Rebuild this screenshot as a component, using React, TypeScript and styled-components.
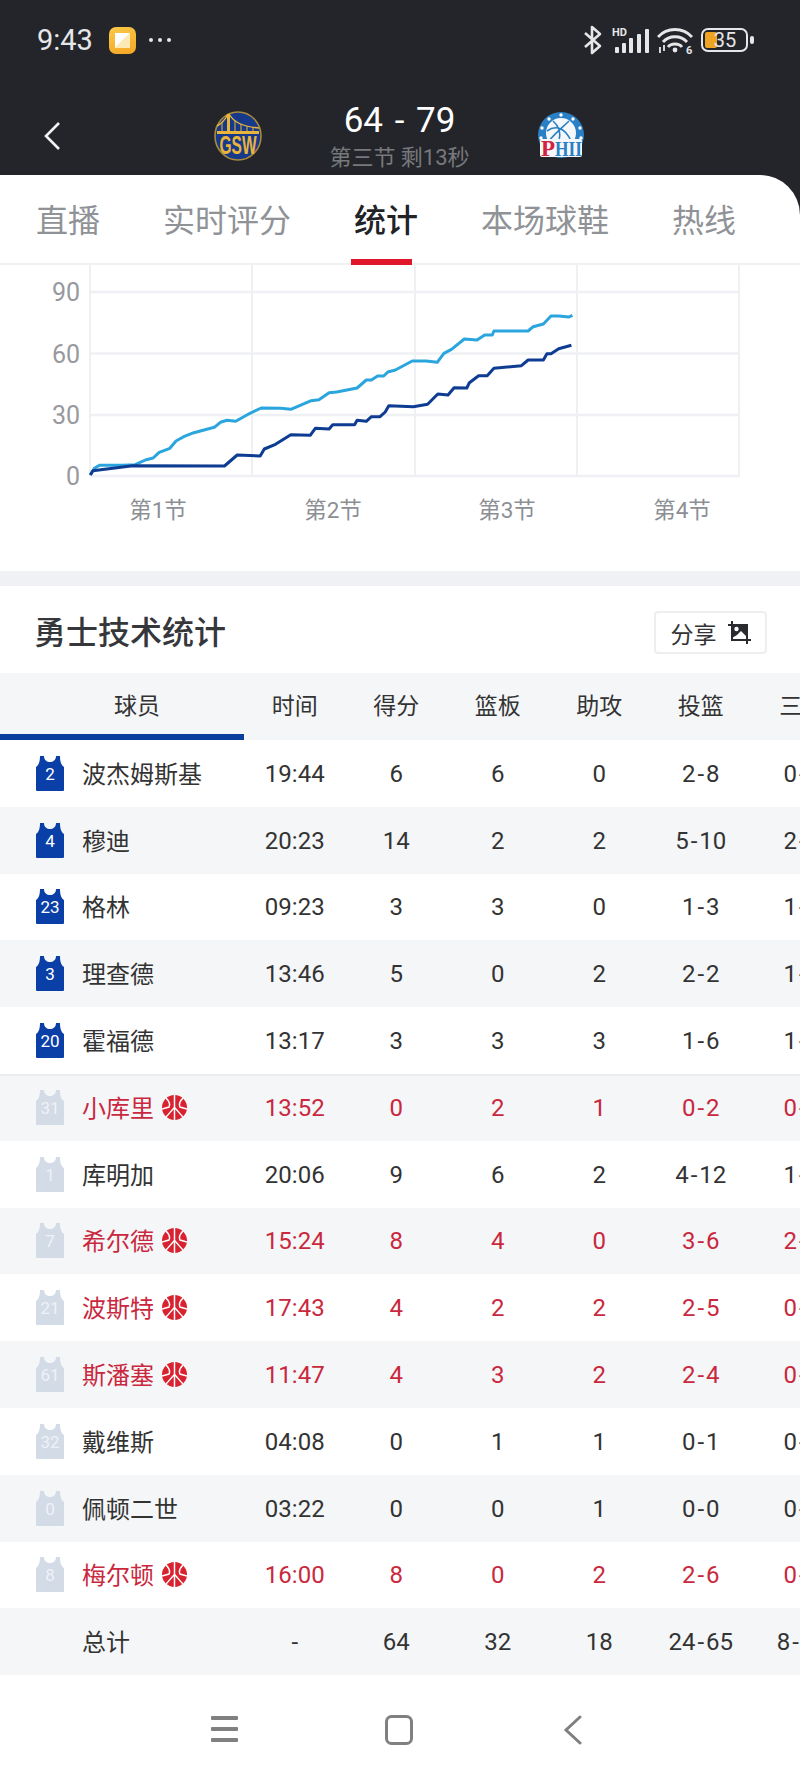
import React from 'react';
import styled, { createGlobalStyle } from 'styled-components';

const FONT = 'Roboto, "Noto Sans CJK SC", sans-serif';
const DARK = '#24252a';
const RED = '#c9283e';

const GlobalStyle = createGlobalStyle`
  html, body {
    margin: 0;
    padding: 0;
    background: #fff;
  }
  body {
    font-family: ${FONT};
  }
`;

const Screen = styled.div`
  width: 800px;
  height: 1778px;
  overflow: hidden;
  background: ${DARK};
`;

const StatusBar = styled.div`
  height: 80px;
  display: flex;
  align-items: center;
  padding: 0 46px 0 37px;
`;

const Time = styled.div`
  font-size: 29px;
  color: #e6e7e9;
  width: 72px;
`;

const AppIcon = styled.div`
  width: 27px;
  height: 27px;
  border-radius: 7px;
  background: linear-gradient(160deg, #fbc84a, #f5a623);
  display: flex;
  align-items: center;
  justify-content: center;
  &::after {
    content: '';
    width: 15px;
    height: 15px;
    background: linear-gradient(135deg, #fff 50%, #fde9b4 50%);
  }
`;

const Dots = styled.div`
  display: flex;
  gap: 5px;
  margin-left: 13px;
  i {
    width: 4px;
    height: 4px;
    border-radius: 50%;
    background: #e6e7e9;
  }
`;

const StatusIcons = styled.div`
  margin-left: auto;
  display: flex;
  align-items: center;
  gap: 8px;
`;

const MatchBar = styled.div`
  height: 95px;
  display: grid;
  grid-template-columns: 214px 48px 275px 48px 1fr;
`;

const BackCell = styled.div`
  padding: 41px 0 0 43px;
`;

const LogoCell = styled.div`
  padding-top: 31px;
`;

const ScoreBlock = styled.div`
  padding-top: 21px;
  text-align: center;
`;

const Score = styled.div`
  font-size: 35px;
  line-height: 40px;
  color: #fff;
  word-spacing: 3px;
`;

const Period = styled.div`
  font-size: 22px;
  line-height: 33px;
  color: #77797d;
`;

const Content = styled.div`
  background: #fff;
  border-top-right-radius: 40px;
  height: 1603px;
`;

const Tabs = styled.div`
  height: 90px;
  box-sizing: border-box;
  display: flex;
  align-items: center;
  gap: 63px;
  padding: 4px 0 0 36px;
  border-bottom: 2px solid #f0f1f3;
`;

const Tab = styled.div<{ $active?: boolean }>`
  position: relative;
  font-size: 32px;
  line-height: 44px;
  color: ${(p) => (p.$active ? '#222327' : '#8f9296')};
  font-weight: ${(p) => (p.$active ? 500 : 400)};
  ${(p) =>
    p.$active &&
    `&::after {
      content: '';
      position: absolute;
      left: -3px;
      width: 61px;
      top: 60px;
      height: 6px;
      background: #e0162b;
    }`}
`;

const ChartHolder = styled.div`
  height: 306px;
  svg {
    display: block;
  }
`;

const Band = styled.div`
  height: 15px;
  background: #eff1f4;
`;

const TitleRow = styled.div`
  height: 87px;
  box-sizing: border-box;
  display: flex;
  align-items: center;
  justify-content: space-between;
  padding: 0 33px 0 34px;
`;

const Title = styled.div`
  font-size: 32px;
  font-weight: 500;
  color: #36373b;
`;

const ShareButton = styled.div`
  width: 113px;
  height: 43px;
  box-sizing: border-box;
  margin-top: 6px;
  border: 2px solid #eceef0;
  border-radius: 4px;
  display: flex;
  align-items: center;
  justify-content: center;
  gap: 11px;
  font-size: 23px;
  color: #333;
`;

const TableWrap = styled.div`
  overflow: hidden;
`;

const Row = styled.div<{ $stripe?: boolean; $divider?: boolean; $head?: boolean }>`
  width: 853px;
  height: ${(p) => (p.$head ? '67px' : '66.8px')};
  box-sizing: border-box;
  display: grid;
  grid-template-columns: 244px repeat(6, 101.5px);
  align-items: center;
  background: ${(p) => (p.$stripe ? '#f5f6f8' : '#fff')};
  box-shadow: ${(p) => (p.$divider ? 'inset 0 2px 0 #ebedf0' : 'none')};
`;

const HeadPlayer = styled.div`
  height: 100%;
  box-sizing: border-box;
  padding: 1px 0 0 30px;
  display: flex;
  align-items: center;
  justify-content: center;
  font-size: 23px;
  color: #333;
  border-bottom: 6px solid #0b3f9e;
`;

const HeadCell = styled.div`
  text-align: center;
  font-size: 23px;
  color: #333;
  padding-bottom: 5px;
`;

const PlayerCell = styled.div`
  display: flex;
  align-items: center;
  padding-left: 36px;
`;

const JerseyHolder = styled.div`
  width: 28px;
  height: 35px;
  margin-right: 18px;
  svg {
    display: block;
  }
`;

const NoJersey = styled.div`
  width: 46px;
`;

const Name = styled.div<{ $red?: boolean }>`
  font-size: 24px;
  padding-bottom: 2px;
  color: ${(p) => (p.$red ? RED : '#333')};
  white-space: nowrap;
`;

const BallHolder = styled.div`
  margin-left: 8px;
  height: 25px;
  svg {
    display: block;
  }
`;

const Stat = styled.div<{ $red?: boolean }>`
  text-align: center;
  font-size: 24px;
  padding-top: 1px;
  white-space: nowrap;
  color: ${(p) => (p.$red ? RED : '#333')};
`;

const Dash = styled.span`
  padding: 0 2px;
`;

const NavBar = styled.div`
  height: 103px;
  box-sizing: border-box;
  padding: 40px 0 0 211px;
  display: flex;
  align-items: flex-start;
  gap: 147px;
`;

const NavBack = styled.div`
  margin-left: 3px;
  height: 30px;
`;

// points read off the chart, in zoom coordinates
const toPoints = (raw: number[][]) =>
  raw.map(([x, y]) => `${(x / 1.96).toFixed(1)},${(y / 3 - 5).toFixed(1)}`).join(' ');

const PHI_LINE = [
  [177, 645], [185, 625], [195, 616], [240, 616], [265, 614], [285, 600], [300, 594], [312, 577],
  [333, 565], [345, 543], [360, 530], [380, 518], [420, 502], [432, 487], [445, 481], [462, 484],
  [490, 460], [512, 444], [550, 445], [570, 448], [610, 422], [625, 419], [645, 398], [660, 396],
  [700, 384], [718, 360], [728, 360], [740, 348], [752, 348], [760, 336], [775, 330], [808, 303],
  [835, 303], [857, 307], [870, 280], [885, 268], [910, 237], [935, 240], [950, 225], [965, 225],
  [968, 213], [1035, 213], [1045, 200], [1065, 192], [1080, 168], [1095, 168], [1115, 171], [1122, 166],
];

const GSW_LINE = [
  [177, 645], [182, 632], [260, 617], [440, 618], [465, 585], [510, 588], [518, 567], [540, 553],
  [570, 524], [608, 526], [618, 505], [645, 507], [652, 494], [695, 494], [700, 481], [718, 484],
  [728, 470], [745, 470], [755, 456], [762, 437], [810, 440], [838, 433], [858, 402], [878, 405],
  [890, 383], [915, 384], [920, 368], [938, 347], [955, 347], [968, 325], [1022, 317], [1035, 300],
  [1065, 300], [1072, 281], [1080, 281], [1095, 266], [1120, 256],
];

const Y_TICKS = [
  { label: '90', y: 27 },
  { label: '60', y: 88.5 },
  { label: '30', y: 150 },
  { label: '0', y: 211 },
];
const X_LINES = [90, 252, 415, 577, 739];
const X_LABELS = [
  { label: '第1节', x: 158 },
  { label: '第2节', x: 333 },
  { label: '第3节', x: 507 },
  { label: '第4节', x: 682 },
];

function Chart() {
  return (
    <ChartHolder>
      <svg width="800" height="306" viewBox="0 0 800 306" fontFamily={FONT}>
        {X_LINES.map((x) => (
          <line key={x} x1={x} x2={x} y1={0} y2={211} stroke="#eff0f3" strokeWidth="2" />
        ))}
        {Y_TICKS.map((t) => (
          <g key={t.label}>
            <line x1={90} x2={740} y1={t.y} y2={t.y} stroke="#eff0f3" strokeWidth="2.5" />
            <text x={80} y={t.y + 9} textAnchor="end" fontSize="25" fill="#97999e">
              {t.label}
            </text>
          </g>
        ))}
        <polyline points={toPoints(PHI_LINE)} fill="none" stroke="#2aa5dd" strokeWidth="3" strokeLinejoin="round" />
        <polyline points={toPoints(GSW_LINE)} fill="none" stroke="#0d3c92" strokeWidth="3" strokeLinejoin="round" />
        {X_LABELS.map((t) => (
          <text key={t.label} x={t.x} y={253} textAnchor="middle" fontSize="22.5" fill="#8c8f94">
            {t.label}
          </text>
        ))}
      </svg>
    </ChartHolder>
  );
}

function Bluetooth() {
  return (
    <svg width="22" height="30" viewBox="0 0 22 30" fill="none" stroke="#e6e7e9" strokeWidth="2.6">
      <path d="M3 8 L18 21 L10 28 V2 L18 9 L3 22" strokeLinejoin="round" />
    </svg>
  );
}

function Signal() {
  return (
    <svg width="37" height="28" viewBox="0 0 37 28" fill="#e6e7e9">
      <text x="0" y="10" fontSize="11" fontWeight="700" fontFamily={FONT}>
        HD
      </text>
      <rect x="3" y="21" width="4" height="6" rx="1" />
      <rect x="10" y="17" width="4" height="10" rx="1" />
      <rect x="17" y="12" width="4" height="15" rx="1" />
      <rect x="25" y="8" width="4" height="19" rx="1" />
      <rect x="33" y="3" width="4" height="24" rx="1" />
    </svg>
  );
}

function Wifi() {
  return (
    <svg width="36" height="28" viewBox="0 0 36 28" fill="none" stroke="#e6e7e9" strokeWidth="2.8">
      <path d="M1 11 C10 1 26 1 35 11" />
      <path d="M6 16 C12 9 24 9 30 16" />
      <path d="M11 21 C14 17 22 17 25 21" />
      <circle cx="18" cy="24" r="2.4" fill="#e6e7e9" stroke="none" />
      <path d="M3 21 v6 M7 19 v6" strokeWidth="1.8" />
      <text x="29" y="28" fontSize="11" fontWeight="700" fill="#e6e7e9" stroke="none" fontFamily={FONT}>
        6
      </text>
    </svg>
  );
}

function Battery() {
  return (
    <svg width="53" height="24" viewBox="0 0 53 24" fill="none">
      <rect x="1" y="1" width="45" height="22" rx="6" stroke="#e6e7e9" strokeWidth="2" />
      <rect x="4" y="4" width="12" height="16" rx="2" fill="#f0a423" />
      <rect x="49" y="8" width="4" height="8" rx="2" fill="#e6e7e9" />
      <text x="24" y="19" textAnchor="middle" fontSize="20" fill="#e6e7e9" fontFamily={FONT}>
        35
      </text>
    </svg>
  );
}

function BackArrow() {
  return (
    <svg width="18" height="30" viewBox="0 0 18 30" fill="none" stroke="#f2f2f2" strokeWidth="2.6">
      <path d="M16 2 L3 15 L16 28" />
    </svg>
  );
}

function GswLogo() {
  return (
    <svg width="48" height="50" viewBox="0 0 48 50">
      <ellipse cx="24" cy="25" rx="23" ry="24" fill="#17398a" stroke="#a98a3c" strokeWidth="1.6" />
      <path d="M3 23 V20 H45 V23 Z M13 3 h3 V23 h-3 Z" fill="#e9b43a" />
      <path d="M15 3 C20 12 32 16 45 17 M14 3 C11 9 7 13 3 15" stroke="#e9b43a" strokeWidth="1.4" fill="none" />
      <path d="M21 10 V20 M27 13 V20 M33 15 V20 M39 16 V20 M8 11 V20" stroke="#e9b43a" strokeWidth="1" />
      <text x="24" y="43" textAnchor="middle" fontSize="26" fontWeight="700" fill="#e9b43a" fontFamily="Liberation Sans, sans-serif" textLength="37" lengthAdjust="spacingAndGlyphs">
        GSW
      </text>
    </svg>
  );
}

function PhiLogo() {
  return (
    <svg width="48" height="50" viewBox="0 0 48 50">
      <circle cx="24" cy="24" r="23" fill="#2a80c4" />
      <circle cx="24" cy="22" r="15" fill="#f5f8fb" />
      {[[24, 4], [12, 8], [36, 8], [5, 17], [43, 17], [4, 27], [44, 27]].map(([x, y]) => (
        <circle key={`${x}-${y}`} cx={x} cy={y} r="1.7" fill="#fff" />
      ))}
      <path d="M10 20 C18 14 28 16 34 30 M16 10 C22 15 24 22 22 30 M32 10 C26 16 18 22 12 30" stroke="#2a80c4" strokeWidth="1.6" fill="none" />
      <rect x="3" y="28" width="42" height="18" fill="#f5f8fb" rx="2" />
      <text x="4" y="45" fontSize="23" fontWeight="700" fill="#d4213d" fontFamily="Liberation Serif, serif">
        P
      </text>
      <text x="18" y="45" fontSize="22" fontWeight="700" fill="#2a80c4" fontFamily="Liberation Serif, serif" textLength="27" lengthAdjust="spacingAndGlyphs">
        HII
      </text>
    </svg>
  );
}

function ShareIcon() {
  return (
    <svg width="23" height="23" viewBox="0 0 23 23" fill="none" stroke="#2a2b2f" strokeWidth="2">
      <path d="M4 0 V19 H23 M0 4 H19 V23" />
      <path d="M4 4 H19 V16 L13 10 L9 14 L4 17 Z" fill="#2a2b2f" stroke="none" />
      <circle cx="8.5" cy="8" r="2.2" fill="#fff" stroke="none" />
    </svg>
  );
}

function Jersey({ num, starter }: { num: string; starter?: boolean }) {
  return (
    <JerseyHolder>
      <svg width="28" height="35" viewBox="0 0 28 35">
        <path
          d="M4 0 L8 0 C8 4 11 6 14 6 C17 6 20 4 20 0 L24 0 C24 5 25 9 28 11 L28 34 Q28 35 27 35 L1 35 Q0 35 0 34 L0 11 C3 9 4 5 4 0 Z"
          fill={starter ? '#0b3fa8' : '#d3dbe7'}
        />
        <text x="14" y="24" textAnchor="middle" fontSize="17" fill={starter ? '#fff' : '#eef2f7'} fontFamily={FONT}>
          {num}
        </text>
      </svg>
    </JerseyHolder>
  );
}

function Ball() {
  return (
    <BallHolder>
      <svg width="25" height="25" viewBox="0 0 25 25" fill="none" stroke="#fff" strokeWidth="1.5">
        <circle cx="12.5" cy="12.5" r="12.5" fill="#d8222f" stroke="none" />
        <path d="M12.5 0 V25" />
        <path d="M4 3 C8 7 8 10 7 12 L0 14 M21 3 C17 7 17 10 18 12 L25 14" />
        <path d="M4 22 C7 19 9 16 12.5 12.5 C16 16 18 19 21 22" />
      </svg>
    </BallHolder>
  );
}

function StatValue({ value, red }: { value: string; red?: boolean }) {
  const parts = value.split('-');
  if (parts.length !== 2 || !parts[0]) return <Stat $red={red}>{value}</Stat>;
  return (
    <Stat $red={red}>
      {parts[0]}
      <Dash>-</Dash>
      {parts[1]}
    </Stat>
  );
}

const PLAYERS = [
  { name: '波杰姆斯基', num: '2', starter: true, stats: ['19:44', '6', '6', '0', '2-8', '0-4'] },
  { name: '穆迪', num: '4', starter: true, stats: ['20:23', '14', '2', '2', '5-10', '2-5'] },
  { name: '格林', num: '23', starter: true, stats: ['09:23', '3', '3', '0', '1-3', '1-3'] },
  { name: '理查德', num: '3', starter: true, stats: ['13:46', '5', '0', '2', '2-2', '1-1'] },
  { name: '霍福德', num: '20', starter: true, stats: ['13:17', '3', '3', '3', '1-6', '1-3'] },
  { name: '小库里', num: '31', hot: true, stats: ['13:52', '0', '2', '1', '0-2', '0-1'] },
  { name: '库明加', num: '1', stats: ['20:06', '9', '6', '2', '4-12', '1-7'] },
  { name: '希尔德', num: '7', hot: true, stats: ['15:24', '8', '4', '0', '3-6', '2-3'] },
  { name: '波斯特', num: '21', hot: true, stats: ['17:43', '4', '2', '2', '2-5', '0-1'] },
  { name: '斯潘塞', num: '61', hot: true, stats: ['11:47', '4', '3', '2', '2-4', '0-2'] },
  { name: '戴维斯', num: '32', stats: ['04:08', '0', '1', '1', '0-1', '0-1'] },
  { name: '佩顿二世', num: '0', stats: ['03:22', '0', '0', '1', '0-0', '0-0'] },
  { name: '梅尔顿', num: '8', hot: true, stats: ['16:00', '8', '0', '2', '2-6', '0-2'] },
];

const TOTALS = ['-', '64', '32', '18', '24-65', '8-33'];
const COLUMNS = ['时间', '得分', '篮板', '助攻', '投篮', '三分'];
const TABS = ['直播', '实时评分', '统计', '本场球鞋', '热线'];

export default function App() {
  return (
    <Screen>
      <GlobalStyle />
      <StatusBar>
        <Time>9:43</Time>
        <AppIcon />
        <Dots>
          <i />
          <i />
          <i />
        </Dots>
        <StatusIcons>
          <Bluetooth />
          <Signal />
          <Wifi />
          <Battery />
        </StatusIcons>
      </StatusBar>
      <MatchBar>
        <BackCell>
          <BackArrow />
        </BackCell>
        <LogoCell>
          <GswLogo />
        </LogoCell>
        <ScoreBlock>
          <Score>64 - 79</Score>
          <Period>第三节 剩13秒</Period>
        </ScoreBlock>
        <LogoCell>
          <PhiLogo />
        </LogoCell>
      </MatchBar>
      <Content>
        <Tabs>
          {TABS.map((t) => (
            <Tab key={t} $active={t === '统计'}>
              {t}
            </Tab>
          ))}
        </Tabs>
        <Chart />
        <Band />
        <TitleRow>
          <Title>勇士技术统计</Title>
          <ShareButton>
            分享
            <ShareIcon />
          </ShareButton>
        </TitleRow>
        <TableWrap>
          <Row $stripe $head>
            <HeadPlayer>球员</HeadPlayer>
            {COLUMNS.map((c) => (
              <HeadCell key={c}>{c}</HeadCell>
            ))}
          </Row>
          {PLAYERS.map((p, i) => (
            <Row key={p.name} $stripe={i % 2 === 1} $divider={i === 5}>
              <PlayerCell>
                <Jersey num={p.num} starter={p.starter} />
                <Name $red={p.hot}>{p.name}</Name>
                {p.hot && <Ball />}
              </PlayerCell>
              {p.stats.map((s, j) => (
                <StatValue key={j} value={s} red={p.hot} />
              ))}
            </Row>
          ))}
          <Row $stripe>
            <PlayerCell>
              <NoJersey />
              <Name>总计</Name>
            </PlayerCell>
            {TOTALS.map((s, j) => (
              <StatValue key={j} value={s} />
            ))}
          </Row>
        </TableWrap>
        <NavBar>
          <svg width="27" height="28" viewBox="0 0 27 28" fill="#808080">
            <rect y="1" width="27" height="4" rx="1" />
            <rect y="12" width="27" height="4" rx="1" />
            <rect y="23" width="27" height="4" rx="1" />
          </svg>
          <svg width="28" height="30" viewBox="0 0 28 30" fill="none" stroke="#808080" strokeWidth="3">
            <rect x="1.5" y="1.5" width="25" height="27" rx="5" />
          </svg>
          <NavBack>
            <svg width="20" height="30" viewBox="0 0 20 30" fill="none" stroke="#808080" strokeWidth="3" strokeLinecap="round">
              <path d="M17 2 L3 15 L17 28" />
            </svg>
          </NavBack>
        </NavBar>
      </Content>
    </Screen>
  );
}
